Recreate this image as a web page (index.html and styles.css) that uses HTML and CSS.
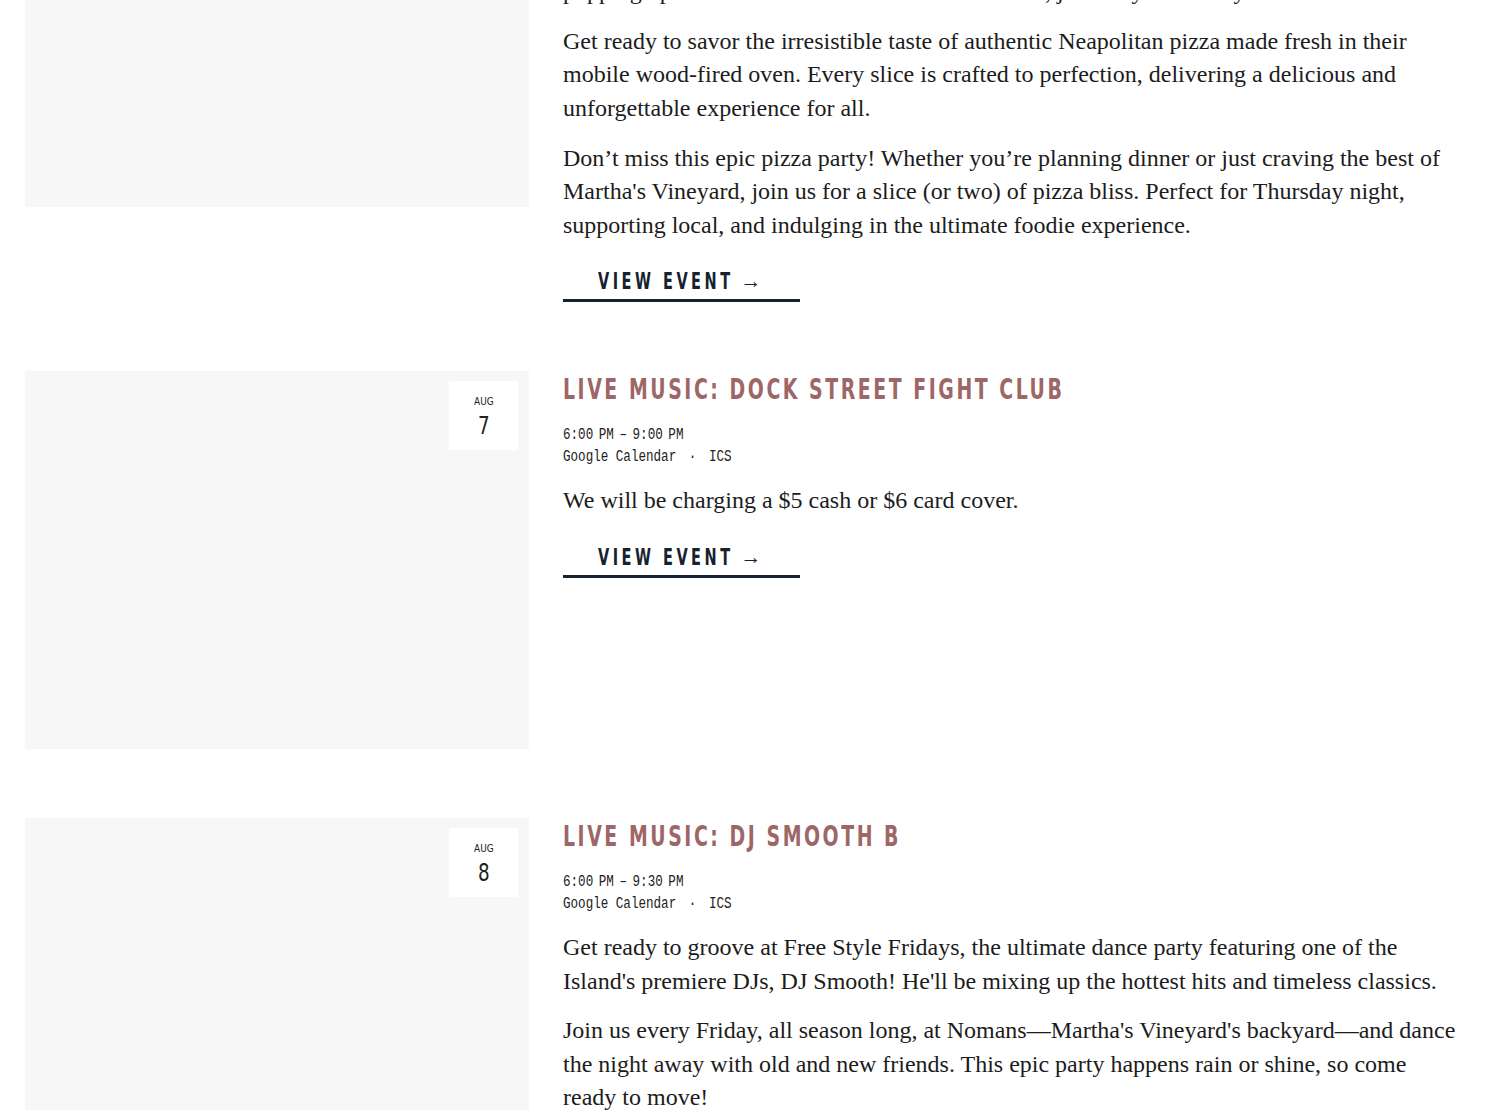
FILE: index.html
```html
<!DOCTYPE html>
<html lang="en">
<head>
<meta charset="utf-8">
<title>Events</title>
<link rel="stylesheet" href="styles.css">
</head>
<body>
<main class="events">
  <article class="event">
    <div class="event-media">
      <div class="date-badge"><span class="date-month">Aug</span><span class="date-day">6</span></div>
    </div>
    <div class="event-body">
      <h2 class="event-title"><span class="cond">Pizza Night: Stoned Pizza Co.</span></h2>
      <div class="event-meta">
        <div class="cond">
          <div class="event-time">6:00 PM – 9:00 PM</div>
          <div class="event-links"><a href="#">Google Calendar</a><span class="dot">·</span><a href="#">ICS</a></div>
        </div>
      </div>
      <p>Pizza lovers, rejoice! Every Thursday this summer, our friends at Stoned Pizza Co. are popping up at Nomans with their wood-fired oven, just for you in the yard.</p>
      <p>Get ready to savor the irresistible taste of authentic Neapolitan pizza made fresh in their mobile wood-fired oven. Every slice is crafted to perfection, delivering a delicious and unforgettable experience for all.</p>
      <p>Don’t miss this epic pizza party! Whether you’re planning dinner or just craving the best of Martha's Vineyard, join us for a slice (or two) of pizza bliss. Perfect for Thursday night, supporting local, and indulging in the ultimate foodie experience.</p>
      <div class="event-action"><a class="btn-view" href="#"><span class="btn-label"><span class="cond">View Event</span></span><span class="arrow">→</span></a></div>
    </div>
  </article>

  <article class="event">
    <div class="event-media">
      <div class="date-badge"><span class="date-month">Aug</span><span class="date-day">7</span></div>
    </div>
    <div class="event-body">
      <h2 class="event-title"><span class="cond">Live Music: Dock Street Fight Club</span></h2>
      <div class="event-meta">
        <div class="cond">
          <div class="event-time">6:00 PM – 9:00 PM</div>
          <div class="event-links"><a href="#">Google Calendar</a><span class="dot">·</span><a href="#">ICS</a></div>
        </div>
      </div>
      <p>We will be charging a $5 cash or $6 card cover.</p>
      <div class="event-action"><a class="btn-view" href="#"><span class="btn-label"><span class="cond">View Event</span></span><span class="arrow">→</span></a></div>
    </div>
  </article>

  <article class="event">
    <div class="event-media">
      <div class="date-badge"><span class="date-month">Aug</span><span class="date-day">8</span></div>
    </div>
    <div class="event-body">
      <h2 class="event-title"><span class="cond">Live Music: DJ Smooth B</span></h2>
      <div class="event-meta">
        <div class="cond">
          <div class="event-time">6:00 PM – 9:30 PM</div>
          <div class="event-links"><a href="#">Google Calendar</a><span class="dot">·</span><a href="#">ICS</a></div>
        </div>
      </div>
      <p>Get ready to groove at Free Style Fridays, the ultimate dance party featuring one of the Island's premiere DJs, DJ Smooth! He'll be mixing up the hottest hits and timeless classics.</p>
      <p>Join us every Friday, all season long, at Nomans—Martha's Vineyard's backyard—and dance the night away with old and new friends. This epic party happens rain or shine, so come ready to move!</p>
      <div class="event-action"><a class="btn-view" href="#"><span class="btn-label"><span class="cond">View Event</span></span><span class="arrow">→</span></a></div>
    </div>
  </article>
</main>
</body>
</html>
```

FILE: styles.css
```css
html, body {
  margin: 0;
  padding: 0;
  background: #ffffff;
}

body {
  font-family: "Liberation Serif", "Times New Roman", serif;
  color: #1c1c1c;
  overflow: hidden;
}

.events {
  display: flex;
  flex-direction: column;
  gap: 69px;
  padding: 0 25px;
  margin-top: -171px;
}

.event {
  display: grid;
  grid-template-columns: 504px 1fr;
  column-gap: 34px;
  align-items: start;
}

.event-media {
  position: relative;
  height: 378px;
  background: #f7f7f7;
}

.date-badge {
  position: absolute;
  top: 10px;
  right: 11px;
  width: 69px;
  height: 69px;
  box-sizing: border-box;
  padding-top: 14px;
  background: #ffffff;
  display: flex;
  flex-direction: column;
  align-items: center;
  font-family: "DejaVu Sans Condensed", "Liberation Sans", sans-serif;
  color: #222;
}

.date-month {
  font-size: 11px;
  line-height: 14px;
  text-transform: uppercase;
  transform: scaleX(0.9);
}

.date-day {
  margin-top: 4px;
  font-size: 24px;
  line-height: 26px;
  font-weight: 400;
  transform: scaleX(0.85);
}

.event-body {
  min-width: 0;
}

.cond {
  display: inline-block;
  white-space: nowrap;
  transform-origin: 0 50%;
}

.event-title {
  margin: 2px 0 0;
  font-family: "DejaVu Sans Condensed", "DejaVu Sans", sans-serif;
  font-weight: 700;
  font-size: 28px;
  line-height: 33.6px;
  letter-spacing: 3.4px;
  text-transform: uppercase;
  color: #9d6667;
}

.event-title .cond {
  transform: scaleX(0.75);
}

.event-meta {
  margin-top: 17px;
  font-family: "Liberation Mono", "DejaVu Sans Mono", monospace;
  font-size: 16px;
  line-height: 22px;
  color: #222;
}

.event-meta .cond {
  display: block;
  transform: scaleX(0.786);
}

.event-time {
  word-spacing: -2.5px;
}

.event-links a {
  color: #222;
  text-decoration: none;
}

.event-links .dot {
  margin: 0 16px;
}

.event-body p {
  margin: 16px 0 0;
  font-size: 24px;
  line-height: 33.6px;
}

.event-body p + p {
  margin-top: 16px;
}

.event-action {
  display: flex;
  margin-top: 18px;
}

.btn-view {
  display: flex;
  align-items: center;
  padding: 8px 40px 5px 35px;
  border-bottom: 3px solid #16222e;
  font-family: "DejaVu Sans Condensed", "DejaVu Sans", sans-serif;
  font-weight: 700;
  font-size: 23px;
  line-height: 26px;
  letter-spacing: 5px;
  text-transform: uppercase;
  color: #16222e;
  text-decoration: none;
}

.btn-label {
  display: block;
  width: 131px;
}

.btn-label .cond {
  transform: scaleX(0.7);
}

.btn-view .arrow {
  width: 20px;
  margin-left: 11px;
  font-family: "Liberation Serif", serif;
  font-weight: 400;
  font-size: 22px;
  letter-spacing: 0;
  line-height: 26px;
  transform: scaleX(0.95);
}
```
